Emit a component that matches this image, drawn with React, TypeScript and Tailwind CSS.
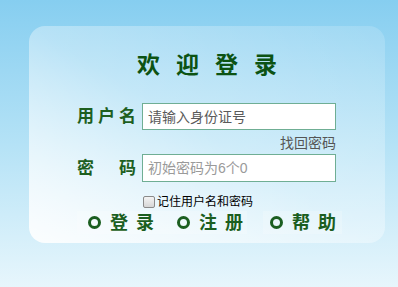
import React from 'react'

const cjk = "font-['Liberation_Sans','Noto_Sans_CJK_SC',sans-serif]"

function NavButton({ label, className }: { label: [string, string]; className: string }) {
    return (
        <button type="button" className={`flex h-[23px] items-center bg-white/20 ${className}`}>
            <span className="block h-[13px] w-[13px] shrink-0 rounded-full border-[3px] border-solid border-[#1b5e20]" />
            <span className="ml-[9px] flex gap-[8px] text-[18px] font-bold leading-none text-[#1b5e20]">
                <span>{label[0]}</span>
                <span>{label[1]}</span>
            </span>
        </button>
    )
}

export default function App() {
    return (
        <div className={`h-[287px] w-[398px] overflow-hidden bg-gradient-to-b from-[#86cef0] via-[#b4e2f6] to-[#e7f6fc] pl-[29px] pt-[26px] ${cjk}`}>
            {/* Card */}
            <div className="h-[217px] w-[356px] rounded-2xl bg-gradient-to-tr from-white/90 via-white/35 to-white/15">
                {/* Title */}
                <div className="flex justify-center gap-[16px] pt-[28px] text-[23px] font-bold leading-[23px] text-[#0c5313]">
                    <span>欢</span>
                    <span>迎</span>
                    <span>登</span>
                    <span>录</span>
                </div>

                {/* Username */}
                <div className="mt-[26px] flex items-center pl-[48px]">
                    <label className="flex w-[59px] justify-between text-[17px] font-semibold leading-none text-[#1d5f1f]">
                        <span>用</span>
                        <span>户</span>
                        <span>名</span>
                    </label>
                    <input
                        className="ml-[6px] h-[27px] w-[194px] border-[1.5px] border-[#6fae94] bg-white px-[5px] text-[14px] text-[#444] outline-none placeholder:text-[#5a5a5a]"
                        placeholder="请输入身份证号"
                    />
                </div>

                <div className="flex w-[307px] justify-end pt-[5px] text-[14px] leading-[16px] text-[#555]">
                    <a>找回密码</a>
                </div>

                {/* Password */}
                <div className="mt-[3px] flex items-center pl-[48px]">
                    <label className="flex w-[59px] justify-between text-[17px] font-semibold leading-none text-[#1d5f1f]">
                        <span>密</span>
                        <span>码</span>
                    </label>
                    <input
                        type="text"
                        className="ml-[6px] h-[28px] w-[194px] border-[1.5px] border-[#6fae94] bg-white px-[5px] text-[14px] text-[#444] outline-none placeholder:text-[#9a9a9a]"
                        placeholder="初始密码为6个0"
                    />
                </div>

                {/* Remember */}
                <div className="mt-[13px] flex items-center pl-[114px] text-[12px] leading-[14px] text-black">
                    <span className="h-[12px] w-[12px] rounded-[2px] border border-[#8a8a8a] bg-gradient-to-b from-[#f4f4f4] to-[#d6d6d6]" />
                    <span className="ml-[2px]">记住用户名和密码</span>
                </div>

                {/* Buttons */}
                <div className="mt-[2px] flex pl-[48px]">
                    <NavButton label={['登', '录']} className="w-[85px] pl-[11px]" />
                    <NavButton label={['注', '册']} className="w-[85px] pl-[15px]" />
                    <NavButton label={['帮', '助']} className="ml-[16px] w-[79px] pl-[7px]" />
                </div>
            </div>
        </div>
    )
}
